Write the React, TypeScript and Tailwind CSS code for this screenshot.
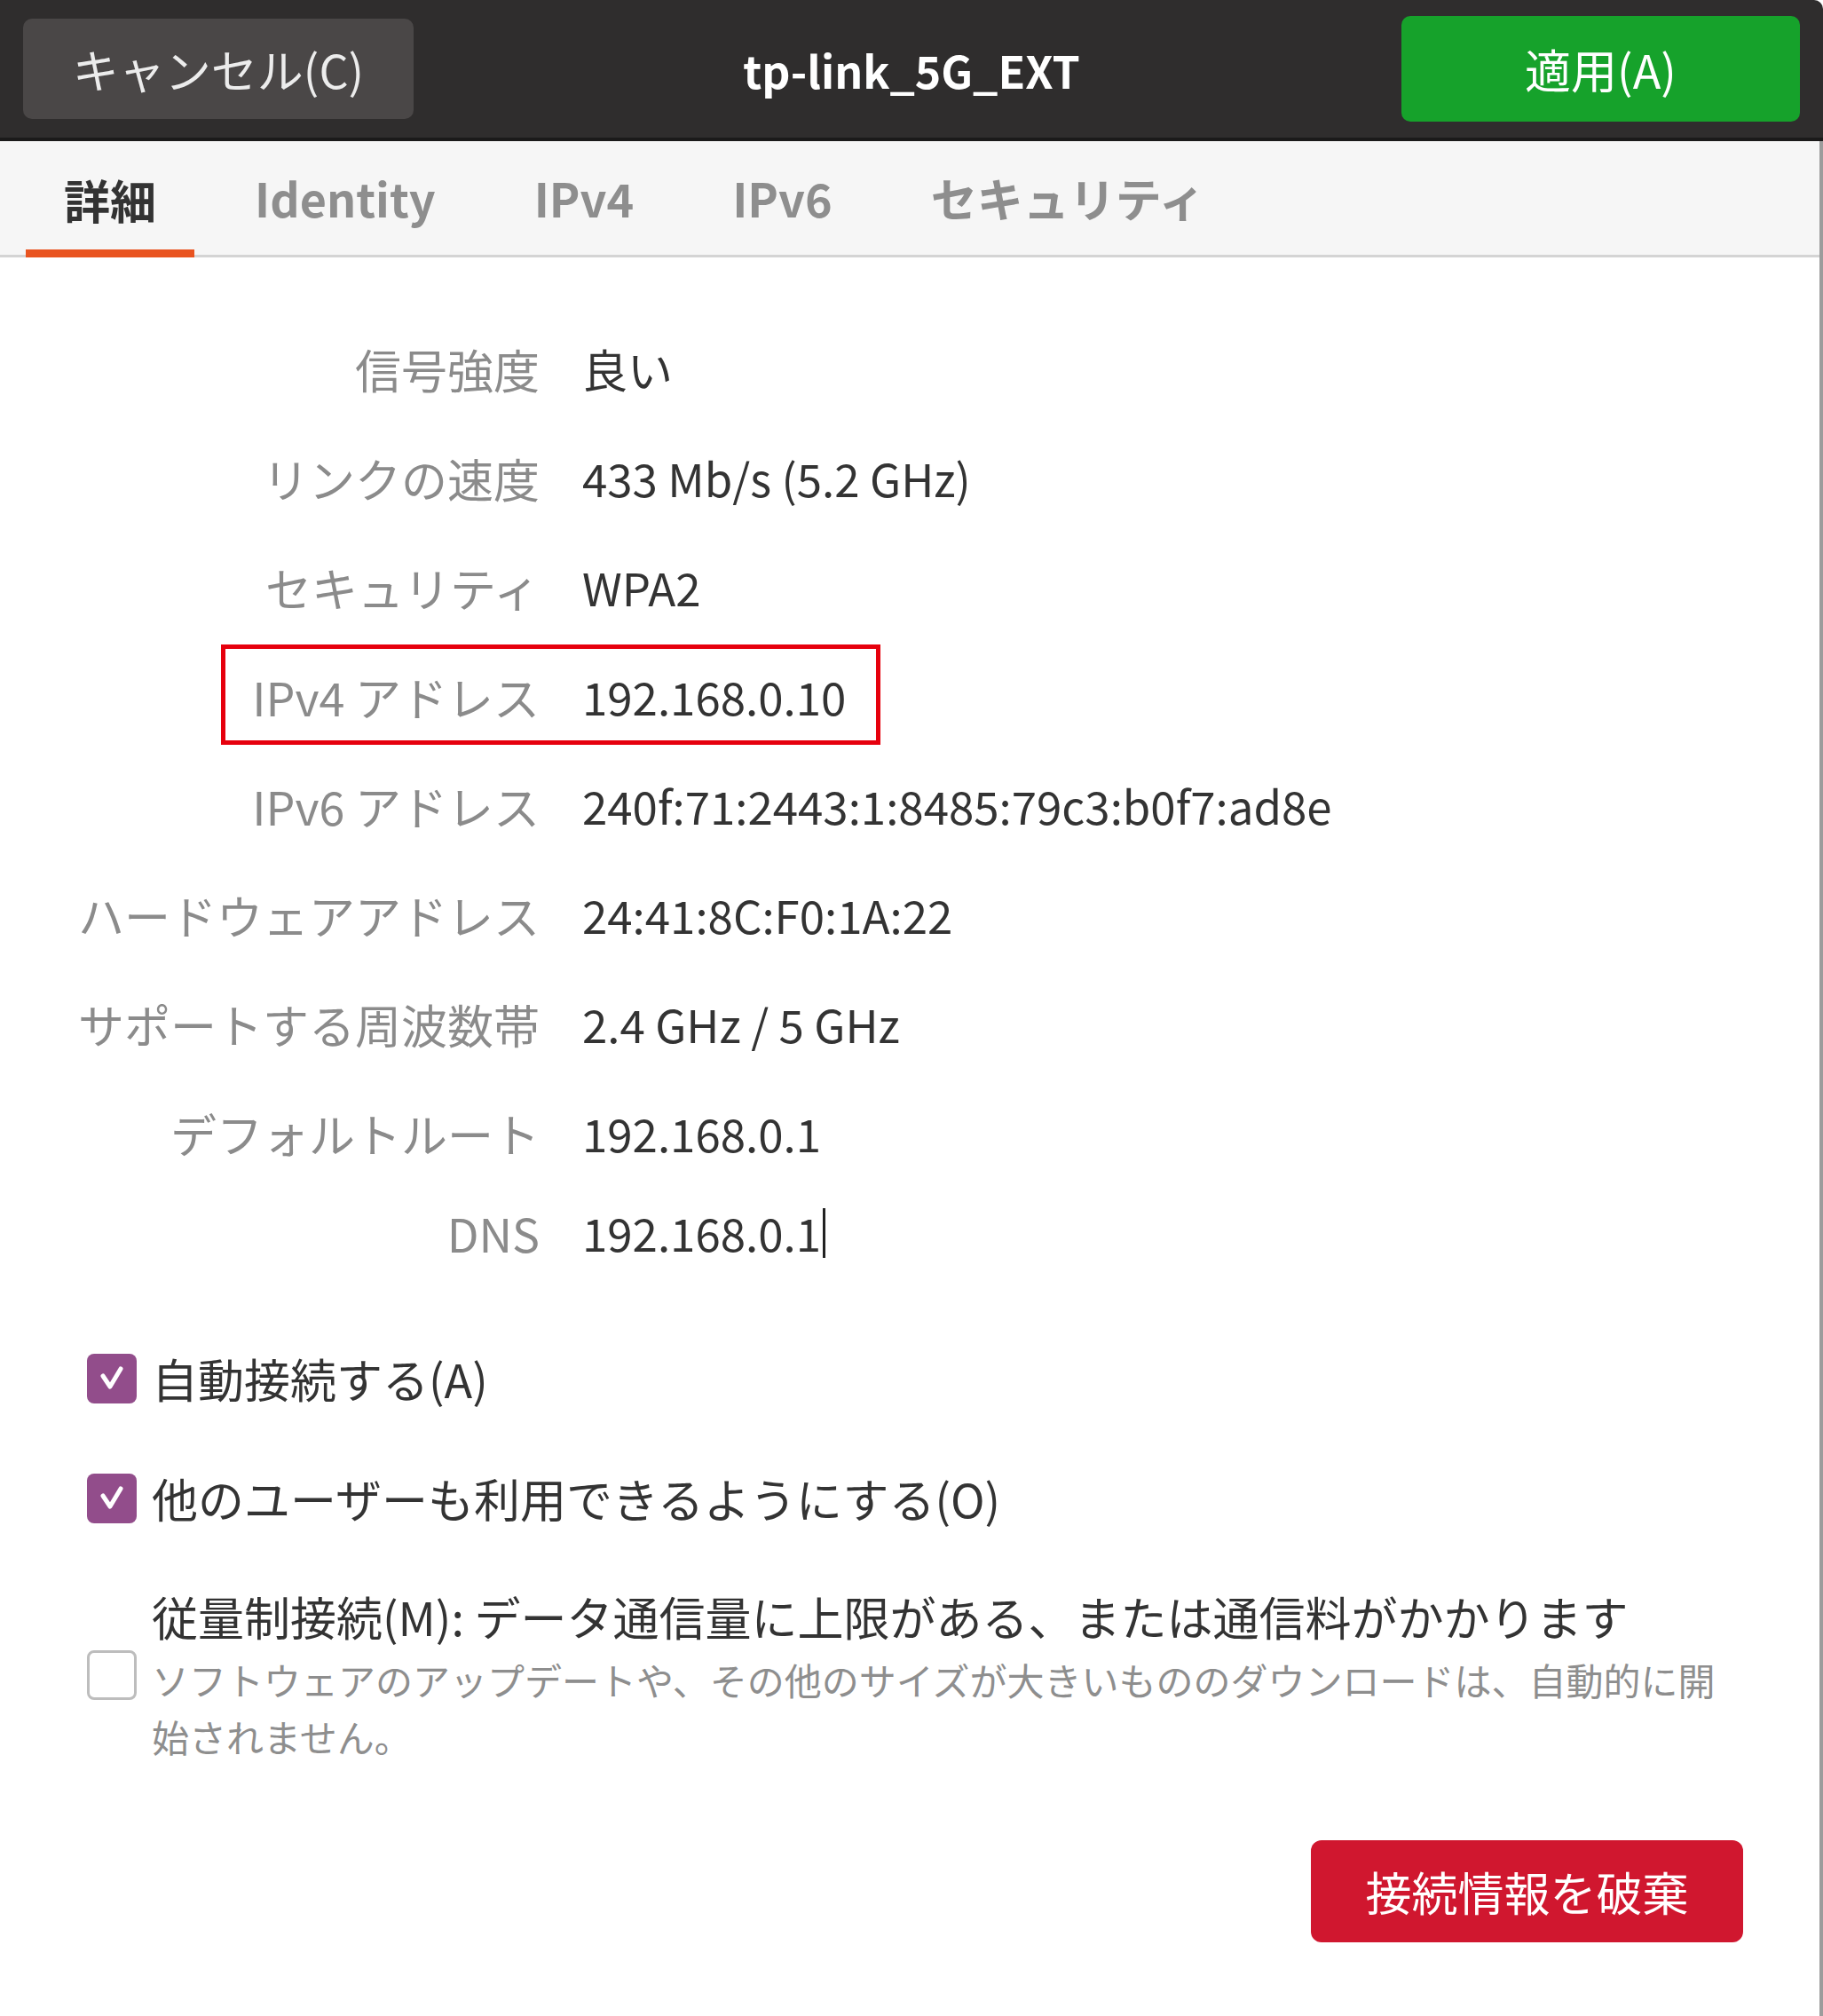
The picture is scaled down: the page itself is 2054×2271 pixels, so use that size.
import React from "react";

const rows: [string, string][] = [
  ["信号強度", "良い"],
  ["リンクの速度", "433 Mb/s (5.2 GHz)"],
  ["セキュリティ", "WPA2"],
  ["IPv4 アドレス", "192.168.0.10"],
  ["IPv6 アドレス", "240f:71:2443:1:8485:79c3:b0f7:ad8e"],
  ["ハードウェアアドレス", "24:41:8C:F0:1A:22"],
  ["サポートする周波数帯", "2.4 GHz / 5 GHz"],
  ["デフォルトルート", "192.168.0.1"],
];

const tabs = ["詳細", "Identity", "IPv4", "IPv6", "セキュリティ"];

function Check({ checked }: { checked: boolean }) {
  if (!checked) {
    return (
      <div className="w-[56px] h-[56px] shrink-0 rounded-[8px] border-[3px] border-[#bdbdbd] bg-white" />
    );
  }
  return (
    <div className="w-[56px] h-[56px] shrink-0 rounded-[8px] bg-[#924d8b] flex items-center justify-center">
      <svg width="56" height="56" viewBox="0 0 56 56">
        <path d="M18 25 L26 37 L38 17" fill="none" stroke="white" strokeWidth="5" strokeLinecap="round" strokeLinejoin="round" />
      </svg>
    </div>
  );
}

export default function App() {
  return (
    <div className="w-[2054px] h-[2271px] bg-white flex flex-col font-['Noto_Sans_CJK_JP',sans-serif] text-[#333333] overflow-hidden">
      {/* Header bar */}
      <header className="h-[159px] shrink-0 bg-[#2f2d2d] border-b-[4px] border-[#1b1a1a] grid grid-cols-[1fr_auto_1fr] items-center px-[26px] rounded-tr-[10px]">
        <div className="flex">
          <button className="w-[440px] h-[113px] rounded-[10px] bg-[#4a4747] text-[#ececec] text-[52px] leading-none">
            キャンセル(C)
          </button>
        </div>
        <div className="text-white font-bold text-[50px] leading-none">tp-link_5G_EXT</div>
        <div className="flex justify-end">
          <button className="w-[449px] h-[119px] rounded-[10px] bg-[#16a22b] text-white text-[52px] leading-none">
            適用(A)
          </button>
        </div>
      </header>

      <div className="flex-1 flex flex-col border-r-[4px] border-[#9c9c9c]">
        {/* Tabs */}
        <nav className="h-[131px] shrink-0 bg-[#f6f6f6] border-b-[3px] border-[#d4d4d4] flex items-stretch pl-[29px] gap-[25px]">
          {tabs.map((t, i) => (
            <div
              key={t}
              className={
                i === 0
                  ? "px-[43px] flex items-center border-b-[9px] border-[#e95420] pt-[9px] -mb-[3px] text-[52px] font-bold text-[#333333]"
                  : "px-[43px] flex items-center text-[52px] font-bold text-[#8e8e8e]"
              }
            >
              {t}
            </div>
          ))}
        </nav>

        {/* Details */}
        <section className="pt-[64px] pl-[87px]">
          {rows.map(([label, value]) => (
            <div key={label} className="relative h-[123px] flex items-center gap-[48px]">
              <div className="w-[521px] text-right text-[52px] text-[#8b8b8b] whitespace-nowrap">{label}</div>
              <div className="text-[51px] text-[#333333] whitespace-nowrap">{value}</div>
              {label.startsWith("IPv4") && (
                <div className="absolute left-[162px] top-[3px] w-[743px] h-[113px] border-[5px] border-[#e6000d]" />
              )}
            </div>
          ))}
          <div className="h-[101px] flex items-center gap-[48px]">
            <div className="w-[521px] text-right text-[52px] text-[#8b8b8b]">DNS</div>
            <div className="flex items-center text-[51px] text-[#333333]">
              192.168.0.1
              <span className="w-[3px] h-[56px] bg-[#222] ml-[2px]" />
            </div>
          </div>
        </section>

        {/* Options */}
        <section className="pl-[98px] pr-[80px] mt-[79px] flex flex-col">
          <label className="h-[70px] flex items-center gap-[17px]">
            <Check checked />
            <span className="text-[52px] leading-[70px]">自動接続する(A)</span>
          </label>
          <label className="h-[70px] mt-[65px] flex items-center gap-[17px]">
            <Check checked />
            <span className="text-[52px] leading-[70px]">他のユーザーも利用できるようにする(O)</span>
          </label>
          <label className="mt-[63px] flex items-center gap-[17px]">
            <Check checked={false} />
            <div className="flex flex-col">
              <span className="text-[52px] leading-[70px] mb-[4px] whitespace-nowrap">
                従量制接続(M): データ通信量に上限がある、または通信料がかかります
              </span>
              <span className="w-[1780px] text-[42px] leading-[64px] text-[#8e8e8e]">
                ソフトウェアのアップデートや、その他のサイズが大きいもののダウンロードは、自動的に開始されません。
              </span>
            </div>
          </label>
        </section>

        <div className="flex justify-end pr-[86px] mt-[85px]">
          <button className="w-[487px] h-[115px] rounded-[12px] bg-[#d0172f] text-white text-[52px] leading-none">
            接続情報を破棄
          </button>
        </div>
      </div>
    </div>
  );
}
